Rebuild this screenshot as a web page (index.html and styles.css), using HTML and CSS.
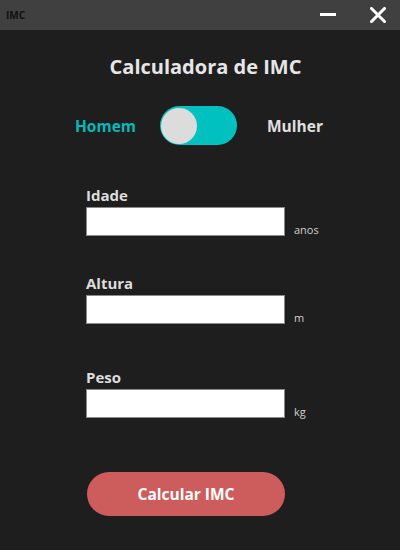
FILE: index.html
```html
<!DOCTYPE html>
<html lang="pt">
<head>
<meta charset="utf-8">
<title>IMC</title>
<link rel="stylesheet" href="styles.css">
</head>
<body>
<div class="window">
  <header class="titlebar">
    <span class="app-name">IMC</span>
    <div class="controls">
      <svg class="ctl" width="16" height="16" viewBox="0 0 16 16"><rect x="0" y="6" width="16" height="3" fill="#fff"/></svg>
      <svg class="ctl close" width="16" height="16" viewBox="0 0 16 16"><path d="M1.5 1.5 L14.5 14.5 M14.5 1.5 L1.5 14.5" stroke="#fff" stroke-width="3" stroke-linecap="square"/></svg>
    </div>
  </header>
  <main class="content">
    <h1 class="title">Calculadora de IMC</h1>
    <div class="gender">
      <span class="g-label active">Homem</span>
      <div class="switch"><div class="knob"></div></div>
      <span class="g-label">Mulher</span>
    </div>
    <form class="form">
      <div class="field f1">
        <label class="label">Idade</label>
        <div class="row"><div class="input"></div><span class="unit">anos</span></div>
      </div>
      <div class="field f2">
        <label class="label">Altura</label>
        <div class="row"><div class="input"></div><span class="unit">m</span></div>
      </div>
      <div class="field f3">
        <label class="label">Peso</label>
        <div class="row"><div class="input"></div><span class="unit">kg</span></div>
      </div>
      <div class="btn">Calcular IMC</div>
    </form>
  </main>
</div>
</body>
</html>
```
FILE: styles.css
```css
html, body {
  margin: 0;
  padding: 0;
  background: #1e1e1e;
}
body {
  font-family: "Open Sans", "Noto Sans", sans-serif;
  width: 400px;
  height: 550px;
  overflow: hidden;
}
.titlebar {
  height: 30px;
  background: #404040;
  display: flex;
  align-items: center;
  justify-content: space-between;
}
.app-name {
  margin-left: 6px;
  font-size: 10px;
  font-weight: 700;
  color: #111;
}
.controls {
  display: flex;
  align-items: center;
  gap: 34px;
  margin-right: 14px;
}
.ctl { display: block; }
.content {
  display: flex;
  flex-direction: column;
}
.title {
  margin: 20px 0 0 0;
  padding-left: 11px;
  text-align: center;
  font-size: 20px;
  line-height: 34px;
  font-weight: 700;
  color: #e6e6e6;
}
.gender {
  display: flex;
  align-items: center;
  margin-top: 22px;
  padding-left: 75px;
}
.g-label {
  font-size: 15.5px;
  font-weight: 700;
  color: #e0e0e0;
}
.g-label.active {
  color: #00b9b9;
  width: 85px;
}
.switch {
  width: 77px;
  height: 39px;
  border-radius: 20px;
  background: #00c0c0;
  display: flex;
  align-items: center;
  padding-left: 1px;
  box-sizing: border-box;
  margin-right: 30px;
}
.knob {
  width: 36px;
  height: 36px;
  border-radius: 50%;
  background: #dcdcdc;
}
.form {
  display: flex;
  flex-direction: column;
  padding-left: 86px;
  margin-top: 40px;
}
.field {
  display: flex;
  flex-direction: column;
}
.f1 { margin-bottom: 37px; }
.f2 { margin-bottom: 43px; }
.f3 { margin-bottom: 54px; }
.label {
  font-size: 15px;
  font-weight: 700;
  color: #dddddd;
  line-height: 20px;
  margin-bottom: 2px;
}
.row {
  display: flex;
  align-items: flex-end;
}
.input {
  width: 199px;
  height: 29px;
  box-sizing: border-box;
  background: #fff;
  border: 1px solid #8a8a8a;
}
.unit {
  margin-left: 9px;
  font-size: 11px;
  color: #d0d0d0;
  line-height: 14px;
  margin-bottom: -1px;
}
.btn {
  margin-left: 1px;
  width: 198px;
  height: 44px;
  border-radius: 22px;
  background: #cd5c5c;
  color: #fff;
  font-size: 15.5px;
  font-weight: 700;
  display: flex;
  align-items: center;
  justify-content: center;
}
```
